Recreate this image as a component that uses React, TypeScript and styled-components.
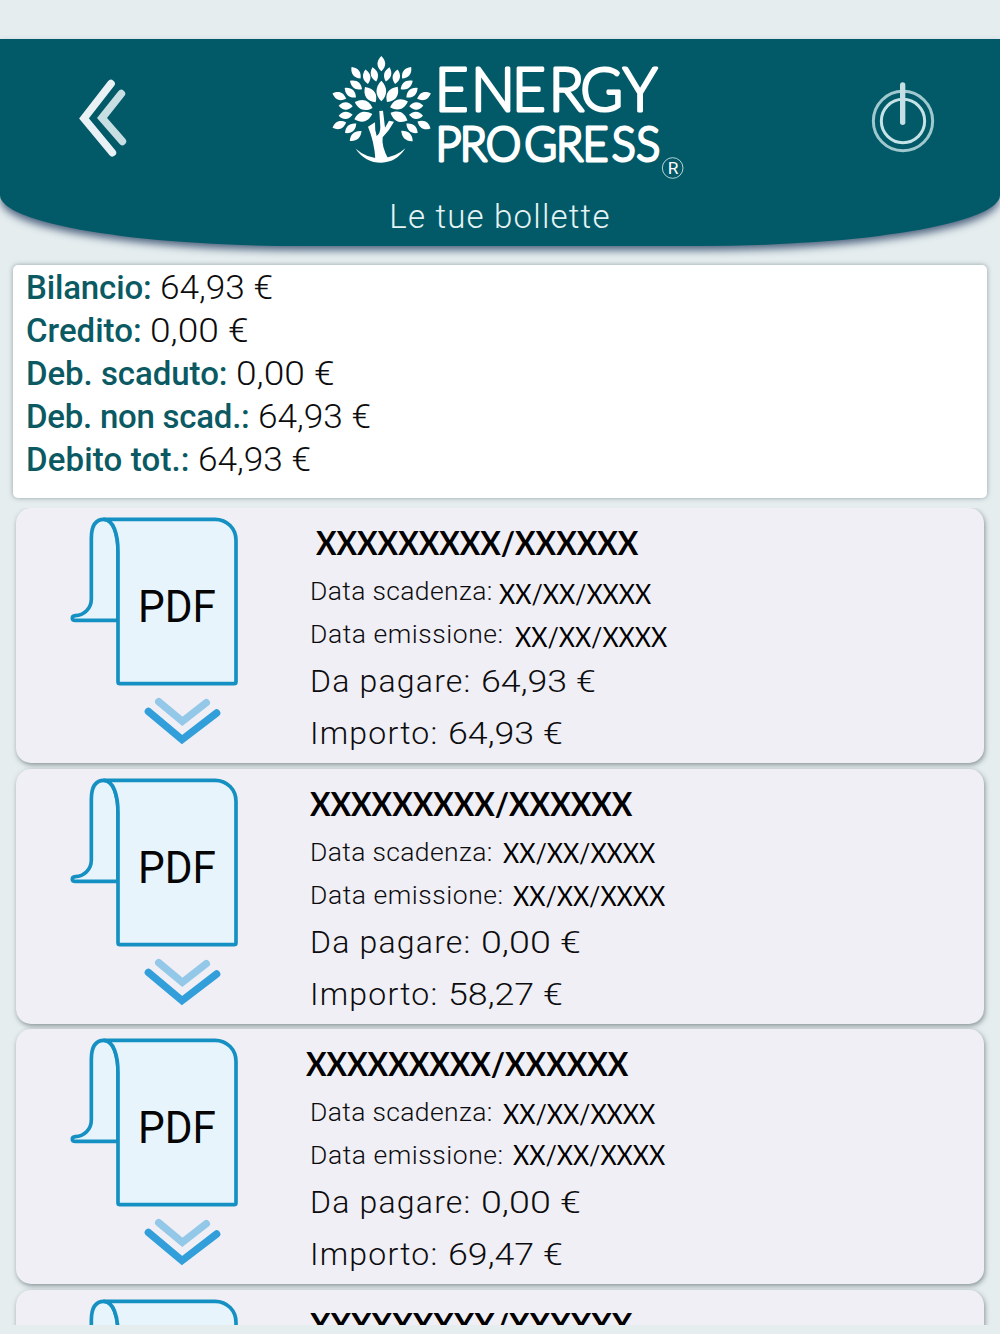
import React from "react";
import styled, { createGlobalStyle } from "styled-components";

const GlobalStyle = createGlobalStyle`
  * { box-sizing: border-box; }
  body { margin: 0; background: #e5edef; }
`;

const Screen = styled.div`
  width: 1000px;
  height: 1334px;
  padding-top: 39px;
  overflow: hidden;
  background: #e5edef;
  color: #0c0c0e;
  font-family: Roboto, "Liberation Sans", sans-serif;
  font-weight: 300;
`;

const Header = styled.header`
  height: 207px;
  background: #025a68;
  border-radius: 0 0 300px 300px / 0 0 51px 51px;
  box-shadow: 0 5px 8px -1px rgba(35, 60, 95, 0.8);
`;

const NavRow = styled.div`
  display: flex;
  align-items: flex-start;
  justify-content: space-between;
  height: 147px;
  padding: 6px 50px 0 60px;
`;

const NavButton = styled.button<{ $width: number }>`
  width: ${(p) => p.$width}px;
  height: 110px;
  margin: 15px 0 0;
  padding: 0;
  border: 0;
  background: none;
  svg { display: block; }
`;

const LogoBox = styled.div`
  width: 370px;
  height: 140px;
  margin-left: 10px;
`;

const PageTitle = styled.h1`
  margin: 0;
  color: #e6f3f4;
  font-size: 33px;
  font-weight: 300;
  line-height: 62px;
  letter-spacing: 1.2px;
  text-align: center;
`;

const Summary = styled.section`
  height: 233px;
  margin: 19px 13px 10px;
  padding: 1px 13px;
  background: #fff;
  border-radius: 5px;
  box-shadow: 0 0 5px rgba(70, 85, 90, 0.5);
`;

const SummaryRow = styled.div`
  display: flex;
  gap: 8.5px;
  font-size: 33px;
  line-height: 43px;
  white-space: nowrap;
`;

const SummaryLabel = styled.span<{ $ls: number }>`
  color: #0b5a63;
  font-weight: 500;
  letter-spacing: ${(p) => p.$ls}px;
`;

const Amount = styled.span<{ $stretch: number }>`
  transform: scaleX(${(p) => p.$stretch});
  transform-origin: left;
`;

const BillList = styled.main`
  display: flex;
  flex-direction: column;
  gap: 5.5px;
  height: 817px;
  padding: 0 16px;
  overflow: hidden;
`;

const BillCard = styled.article`
  display: flex;
  flex: 0 0 255px;
  padding-left: 44px;
  background: #f0eff5;
  border-radius: 15px;
  box-shadow: 1px 2px 5px rgba(60, 75, 80, 0.55);
`;

const DocIcon = styled.svg`
  flex: none;
  width: 200px;
  height: 247px;
`;

const BillInfo = styled.div`
  padding: 9px 0 0 50px;
  white-space: nowrap;
`;

const BillNumber = styled.h2<{ $shift: number }>`
  margin: 0 0 2px ${(p) => p.$shift}px;
  color: #000;
  font-family: Lato, "Liberation Sans", sans-serif;
  font-size: 33px;
  font-weight: 700;
  line-height: 50px;
  transform: scaleX(0.928);
  transform-origin: left;
`;

const DateRow = styled.div`
  display: flex;
  height: 43px;
  font-size: 26.5px;
  line-height: 43px;
`;

const DateLabel = styled.span<{ $width: number; $ls: number }>`
  width: ${(p) => p.$width}px;
  letter-spacing: ${(p) => p.$ls}px;
`;

const DateValue = styled.span<{ $drop: number }>`
  padding-top: ${(p) => p.$drop}px;
  color: #000;
  font-family: Lato, "Liberation Sans", sans-serif;
  font-size: 27px;
  font-weight: 400;
  transform: scaleX(0.925);
  transform-origin: left;
`;

const MoneyRow = styled.div`
  display: flex;
  gap: 9.5px;
  font-size: 32px;
  line-height: 52px;
`;

const MoneyLabel = styled.span`
  letter-spacing: 1.2px;
`;

// cx, cy, rotation, length, width
const leaves: number[][] = [
  [184, 56, 0, 46, 20],
  [108, 83, -38, 44, 19], [260, 83, 38, 44, 19],
  [140, 95, -10, 44, 19], [229, 95, 10, 44, 19],
  [163, 88, -15, 44, 18], [203, 88, 15, 44, 18],
  [108, 120, -55, 44, 19], [260, 120, 55, 44, 19],
  [91, 143, -50, 44, 19], [276, 143, 50, 44, 19],
  [58, 153, -68, 44, 20], [312, 153, 68, 44, 20],
  [77, 183, -88, 42, 19], [289, 183, 88, 42, 19],
  [77, 211, 86, 42, 19], [288, 211, -86, 42, 19],
  [58, 240, 68, 44, 20], [312, 240, -62, 44, 20],
  [92, 250, 50, 44, 19], [276, 250, -50, 44, 19],
  [107, 273, 50, 46, 19], [261, 273, -48, 46, 19],
  [151, 149, -35, 56, 26], [217, 148, 35, 56, 26],
  [184, 138, 0, 62, 25],
  [131, 180, -72, 56, 25], [237, 178, 72, 56, 25],
  [130, 215, 74, 56, 25], [237, 215, -65, 56, 25],
];

const Logo = () => (
  <svg width="370" height="140" viewBox="0 0 1110 420" fill="#fff">
    {leaves.map(([x, y, r, l, w], i) => (
      <path
        key={i}
        transform={`translate(${x} ${y}) rotate(${r})`}
        d={`M0 ${-l / 2}C${w * 0.8} ${-l / 6} ${w * 0.75} ${l / 5} 0 ${l / 2}C${-w * 0.75} ${l / 5} ${-w * 0.8} ${-l / 6} 0 ${-l / 2}Z`}
      />
    ))}
    <path d="M144 245L165 232Q164 256 170 273Q181 266 181 246L178 198L189 197L195 248L207 227L222 230Q209 255 188 277Q184 305 205 342L166 342Q163 290 144 245Z" />
    <path d="M107 311Q140 340 184 340Q226 338 256 310Q230 352 184 353Q135 353 107 311Z" />
    <g
      transform="scale(0.94 1)"
      stroke="#fff"
      strokeWidth="9"
      strokeLinejoin="round"
      fontFamily="Lato, 'Liberation Sans', sans-serif"
      fontWeight="300"
    >
      <text x="366 482 613 730 831 966" y="197" fontSize="186">ENERGY</text>
      <text x="369 446 529 652 753 838 931 1009" y="348" fontSize="143">PROGRESS</text>
    </g>
    <circle cx="1058" cy="369" r="31" fill="none" stroke="#d8e9eb" strokeWidth="2.5" />
    <text x="1059" y="387" fontSize="52" textAnchor="middle" fontFamily="Roboto, sans-serif" fontWeight="400">R</text>
  </svg>
);

const BackIcon = () => (
  <svg width="90" height="110" viewBox="0 0 270 330" fill="none" strokeWidth="23" strokeLinecap="round">
    <path d="M184 101L126 174L187 244" stroke="#c7dfe2" />
    <path d="M153 71L72 175L157 278" stroke="#e9f1f4" />
  </svg>
);

const PowerIcon = () => (
  <svg width="100" height="110" viewBox="0 0 300 330" fill="none">
    <circle cx="159" cy="183" r="89" stroke="#9fc9ce" strokeWidth="9" />
    <circle cx="159" cy="183" r="65" stroke="#c5e3e7" strokeWidth="9" />
    <path d="M158 75V187" stroke="#c5dfe4" strokeWidth="16" strokeLinecap="round" />
  </svg>
);

const PdfIcon = () => (
  <DocIcon viewBox="0 9 600 741" fill="none">
    <g fill="#e8f4fb" stroke="#1590c2" strokeWidth="11" strokeLinejoin="round">
      <path d="M132 43C108 43 94 62 94 100V282C94 310 72 332 46 332C34 333 34 346 46 346H174V140C174 88 160 43 132 43Z" />
      <path d="M132 43H465C502 43 528 72 528 106V530Q528 536 522 536H180Q174 536 174 530V140C174 88 160 43 132 43Z" />
    </g>
    <text x="234" y="351" fontSize="131" fill="#050505" fontFamily="Roboto, sans-serif" fontWeight="400" textLength="234" lengthAdjust="spacingAndGlyphs">PDF</text>
    <g strokeWidth="22" strokeLinecap="round">
      <path d="M296 590L367 649L439 593" stroke="#93c8e8" />
      <path d="M265 619L366 704L470 624" stroke="#329fdb" />
    </g>
  </DocIcon>
);

const summary = [
  { label: "Bilancio:", value: "64,93 €", ls: -0.15 },
  { label: "Credito:", value: "0,00 €", ls: 0 },
  { label: "Deb. scaduto:", value: "0,00 €", ls: -0.05 },
  { label: "Deb. non scad.:", value: "64,93 €", ls: -0.25 },
  { label: "Debito tot.:", value: "64,93 €", ls: 0.15 },
];

const stretchFor = (value: string, zero: number, other: number) =>
  value.startsWith("0,") ? zero : other;

const bills = [
  { shift: 6, due: 189, issued: 205, dueDrop: 3, issuedDrop: 3, toPay: "64,93 €", amount: "64,93 €" },
  { shift: 0, due: 193, issued: 203, dueDrop: 1, issuedDrop: 1, toPay: "0,00 €", amount: "58,27 €" },
  { shift: -4, due: 193, issued: 203, dueDrop: 2, issuedDrop: 0, toPay: "0,00 €", amount: "69,47 €" },
  { shift: 0, due: 193, issued: 203, dueDrop: 1, issuedDrop: 1, toPay: "0,00 €", amount: "64,93 €" },
];

export default function App() {
  return (
    <>
      <GlobalStyle />
      <Screen>
        <Header>
          <NavRow>
            <NavButton $width={90} aria-label="Indietro"><BackIcon /></NavButton>
            <LogoBox><Logo /></LogoBox>
            <NavButton $width={100} aria-label="Esci"><PowerIcon /></NavButton>
          </NavRow>
          <PageTitle>Le tue bollette</PageTitle>
        </Header>
        <Summary>
          {summary.map((row) => (
            <SummaryRow key={row.label}>
              <SummaryLabel $ls={row.ls}>{row.label}</SummaryLabel>
              <Amount $stretch={stretchFor(row.value, 1.125, 1.067)}>{row.value}</Amount>
            </SummaryRow>
          ))}
        </Summary>
        <BillList>
          {bills.map((bill, i) => (
            <BillCard key={i}>
              <PdfIcon />
              <BillInfo>
                <BillNumber $shift={bill.shift}>XXXXXXXXX/XXXXXX</BillNumber>
                <DateRow>
                  <DateLabel $width={bill.due} $ls={0.35}>Data scadenza:</DateLabel>
                  <DateValue $drop={bill.dueDrop}>XX/XX/XXXX</DateValue>
                </DateRow>
                <DateRow>
                  <DateLabel $width={bill.issued} $ls={0.55}>Data emissione:</DateLabel>
                  <DateValue $drop={bill.issuedDrop}>XX/XX/XXXX</DateValue>
                </DateRow>
                <MoneyRow>
                  <MoneyLabel>Da pagare:</MoneyLabel>
                  <Amount $stretch={stretchFor(bill.toPay, 1.175, 1.117)}>{bill.toPay}</Amount>
                </MoneyRow>
                <MoneyRow>
                  <MoneyLabel>Importo:</MoneyLabel>
                  <Amount $stretch={stretchFor(bill.amount, 1.175, 1.117)}>{bill.amount}</Amount>
                </MoneyRow>
              </BillInfo>
            </BillCard>
          ))}
        </BillList>
      </Screen>
    </>
  );
}
